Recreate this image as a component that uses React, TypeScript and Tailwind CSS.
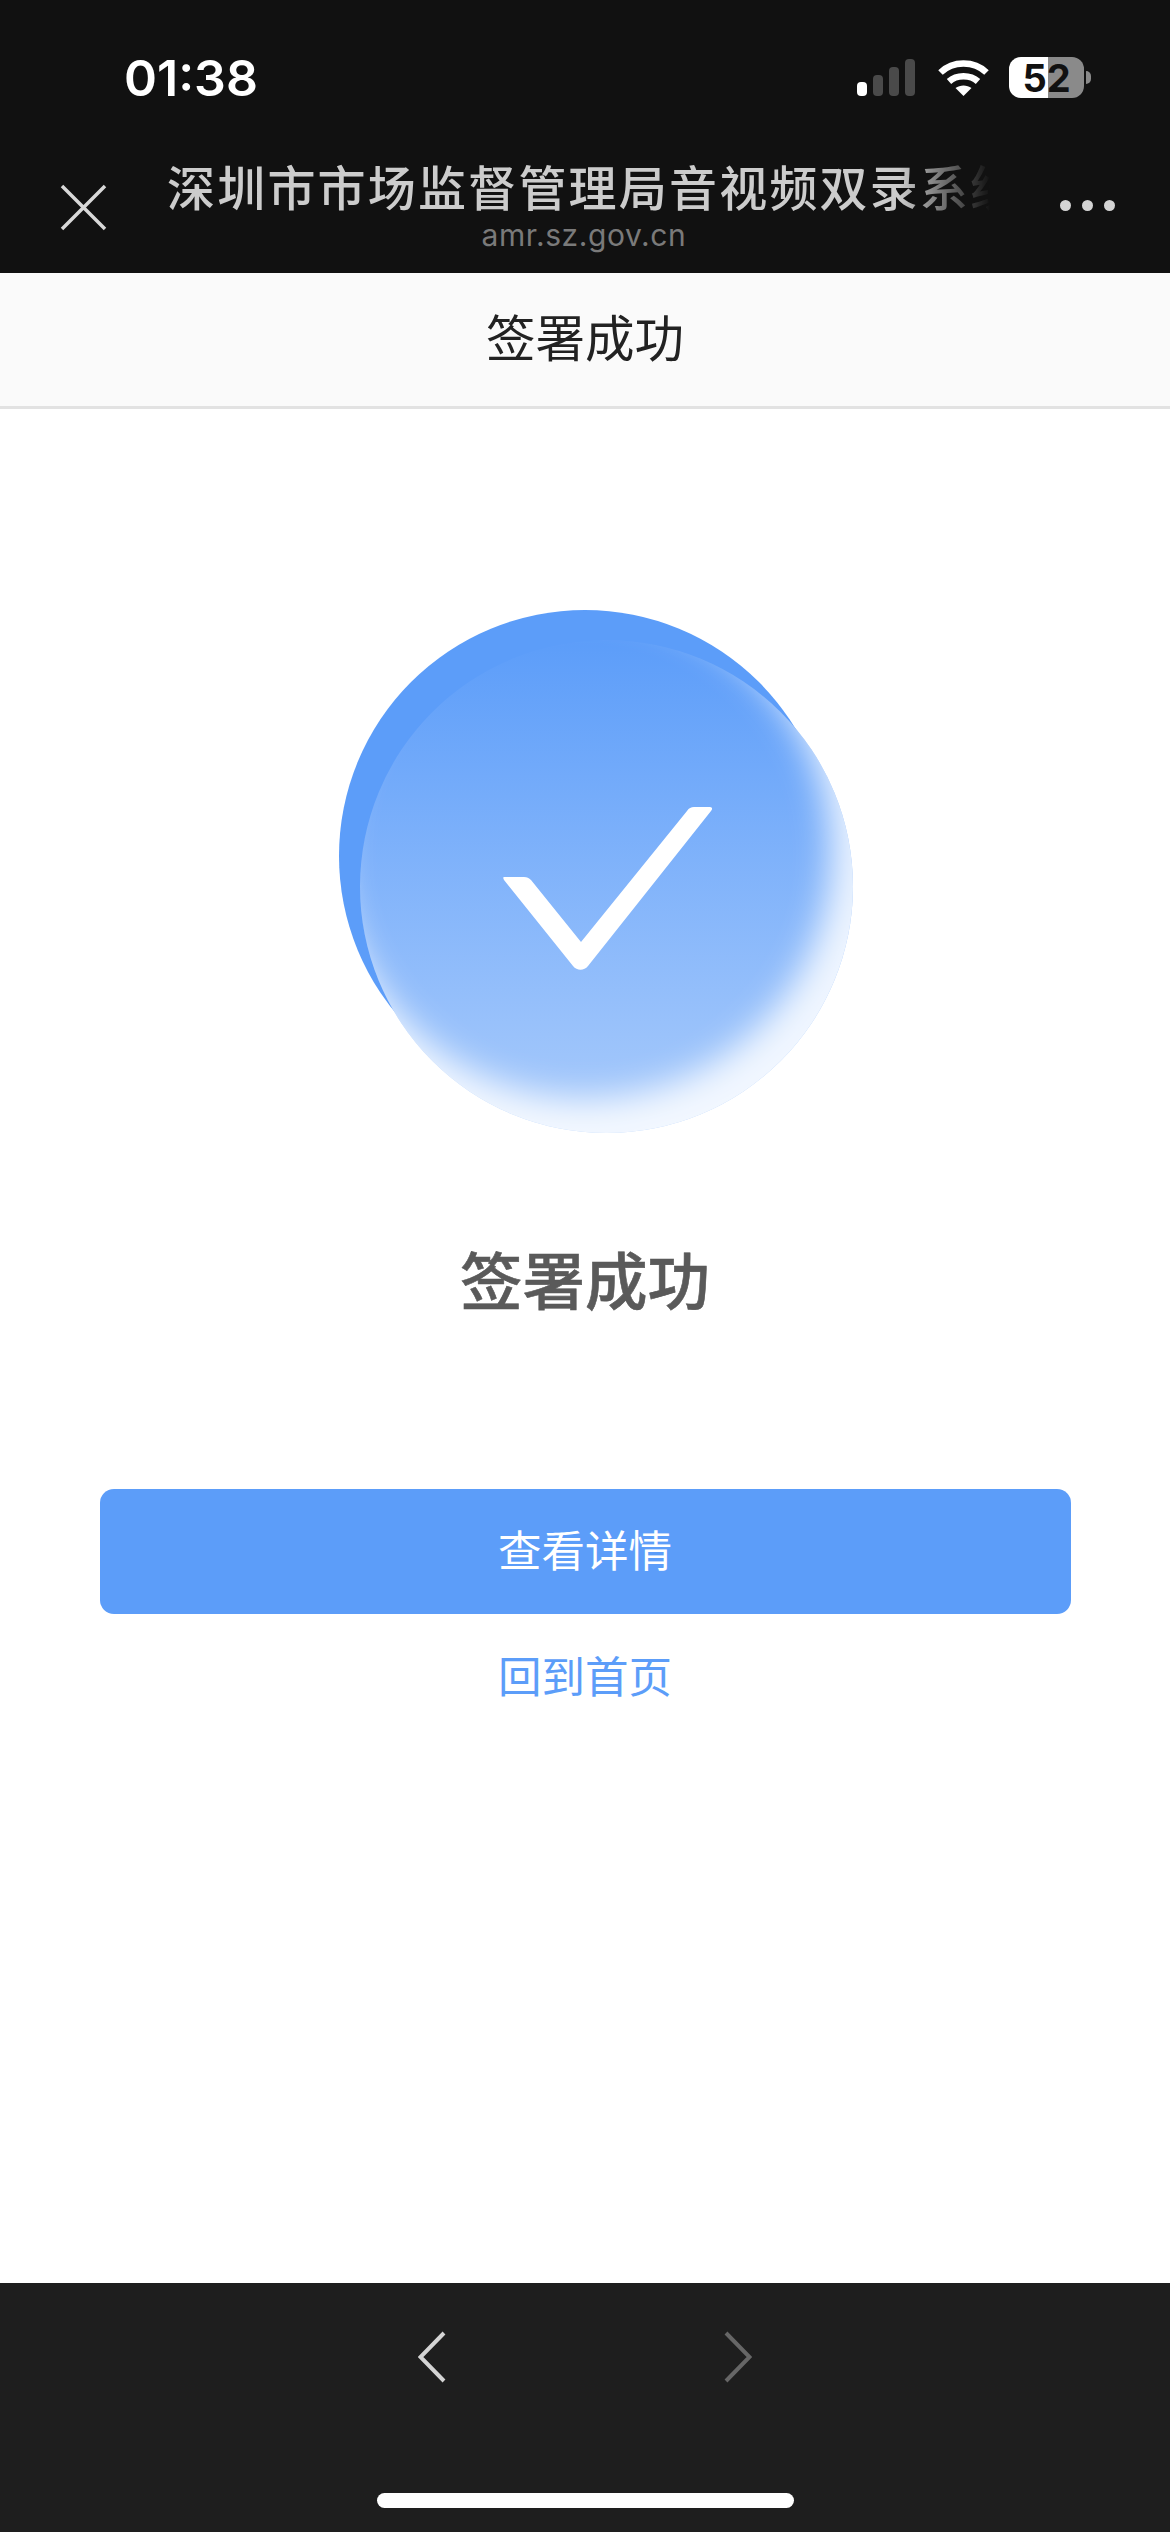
import React from "react";

const cjk = "font-['Inter','Noto_Sans_CJK_SC',sans-serif]";

const SignalBars: React.FC = () => (
  <div className="flex items-end gap-[6px]">
    <div className="w-[10px] h-[14px] rounded-[4px] bg-white" />
    <div className="w-[10px] h-[21px] rounded-[4px] bg-[#4a4a4a]" />
    <div className="w-[10px] h-[29px] rounded-[4px] bg-[#4a4a4a]" />
    <div className="w-[10px] h-[37px] rounded-[4px] bg-[#4a4a4a]" />
  </div>
);

const Wifi: React.FC = () => (
  <svg width="51" height="37" viewBox="0 0 51 37" fill="none">
    <path d="M2.5 13.5C15 1.5 36 1.5 48.5 13.5" stroke="#fff" strokeWidth="6.5" />
    <path d="M11 22.5C18.5 15.5 32.5 15.5 40 22.5" stroke="#fff" strokeWidth="6.5" />
    <path d="M17.5 29C22 25.5 29 25.5 33.5 29L25.5 37Z" fill="#fff" />
  </svg>
);

const Battery: React.FC = () => (
  <div className="flex items-center gap-[2px]">
    <div className="w-[75px] h-[41px] rounded-[12px] bg-[linear-gradient(to_right,#ffffff_52%,#8a8a8a_52%)] flex items-center justify-center">
      <span className="text-[38px] leading-none font-bold text-[#111111] font-['Inter',sans-serif]">52</span>
    </div>
    <div className="w-[5px] h-[13px] rounded-r-full bg-[#8a8a8a]" />
  </div>
);

const App: React.FC = () => {
  return (
    <div className={`w-[1170px] h-[2532px] flex flex-col bg-white overflow-hidden ${cjk}`}>
      {/* status bar and webview title */}
      <div className="h-[273px] bg-[#111111] flex flex-col">
        <div className="h-[133px] pt-[50px] pl-[124px] pr-[79px] flex items-start justify-between">
          <span className="text-[50px] leading-[56px] font-semibold text-white">01:38</span>
          <div className="flex items-center gap-[20px] pt-[7px]">
            <div className="-ml-[3px] mr-[3px]">
              <SignalBars />
            </div>
            <Wifi />
            <Battery />
          </div>
        </div>
        <div className="flex items-start pl-[60px] pr-[57px]">
          <svg width="47" height="47" viewBox="0 0 47 47" className="mt-[51px] shrink-0">
            <path d="M2 2L45 45M45 2L2 45" stroke="#d8d8d8" strokeWidth="3.5" />
          </svg>
          <div className="w-[840px] ml-[60px] flex flex-col items-center">
            <div className="w-[832px] mr-[8px] h-[64px] mt-[24px] overflow-hidden text-[48px] leading-[64px] tracking-[2.2px] font-medium text-[#cccccc] [mask-image:linear-gradient(to_right,#000_88%,transparent_99%)]">
              <span className="inline-block w-[900px]">深圳市市场监督管理局音视频双录系统</span>
            </div>
            <div className="text-[30px] leading-[36px] tracking-[0.6px] text-[#7a7a7a] -mt-[4px] mr-[6px]">amr.sz.gov.cn</div>
          </div>
          <div className="ml-[53px] mt-[67px] flex gap-[11px]">
            <div className="w-[11px] h-[11px] rounded-full bg-[#d4d4d4]" />
            <div className="w-[11px] h-[11px] rounded-full bg-[#d4d4d4]" />
            <div className="w-[11px] h-[11px] rounded-full bg-[#d4d4d4]" />
          </div>
        </div>
      </div>

      {/* page header */}
      <div className="h-[136px] bg-[#fafafa] border-b-[3px] border-[#e2e2e2] flex items-center justify-center">
        <span className="text-[49.5px] text-[#222222] leading-none">签署成功</span>
      </div>

      <div className="flex-1 flex flex-col items-center">
        <div className="relative self-start ml-[339px] mt-[201px] w-[514px] h-[523px]">
          <div className="absolute left-0 top-0 w-[492px] h-[492px] rounded-full bg-[#5c9df9]" />
          <div className="absolute left-[21px] top-[30px] w-[493px] h-[493px] rounded-full bg-gradient-to-b from-[#5c9df9] to-[#a9cbfb] shadow-[inset_-22px_-34px_34px_rgba(255,255,255,0.85)]" />
          <svg width="210" height="166" viewBox="0 0 210 166" className="absolute left-[164px] top-[196px]">
            <path
              d="M1 71H21C24 71 26 72 28 74L78 136L184 5C186 2 188 1 191 1H207C209 1 210 3 208 5L85 160C81 165 74 165 70 160L1 74C0 72 0 71 1 71Z"
              fill="#fff"
            />
          </svg>
        </div>

        <h1 className="mt-[114px] text-[62.5px] leading-[70px] font-medium [-webkit-text-stroke:0.6px_#5a5a5a] text-[#5a5a5a]">
          签署成功
        </h1>

        <button className="mt-[172px] w-[971px] h-[125px] rounded-[14px] bg-[#5c9df9] text-white text-[43.5px] leading-none">
          查看详情
        </button>
        <button className="mt-[33px] text-[43.5px] leading-[60px] text-[#5c9df9]">回到首页</button>
      </div>

      {/* browser toolbar */}
      <div className="h-[249px] bg-[#1e1e1e] flex flex-col items-center">
        <div className="mt-[48px] h-[51px] flex items-center gap-[278px]">
          <svg width="28" height="52" viewBox="0 0 28 52" fill="none">
            <path d="M26 2L2.5 26L26 50" stroke="#d4d4d4" strokeWidth="4" />
          </svg>
          <svg width="28" height="52" viewBox="0 0 28 52" fill="none">
            <path d="M2 2L25.5 26L2 50" stroke="#666666" strokeWidth="4" />
          </svg>
        </div>
        <div className="mt-[111px] w-[417px] h-[15px] rounded-full bg-white" />
      </div>
    </div>
  );
};

export default App;
